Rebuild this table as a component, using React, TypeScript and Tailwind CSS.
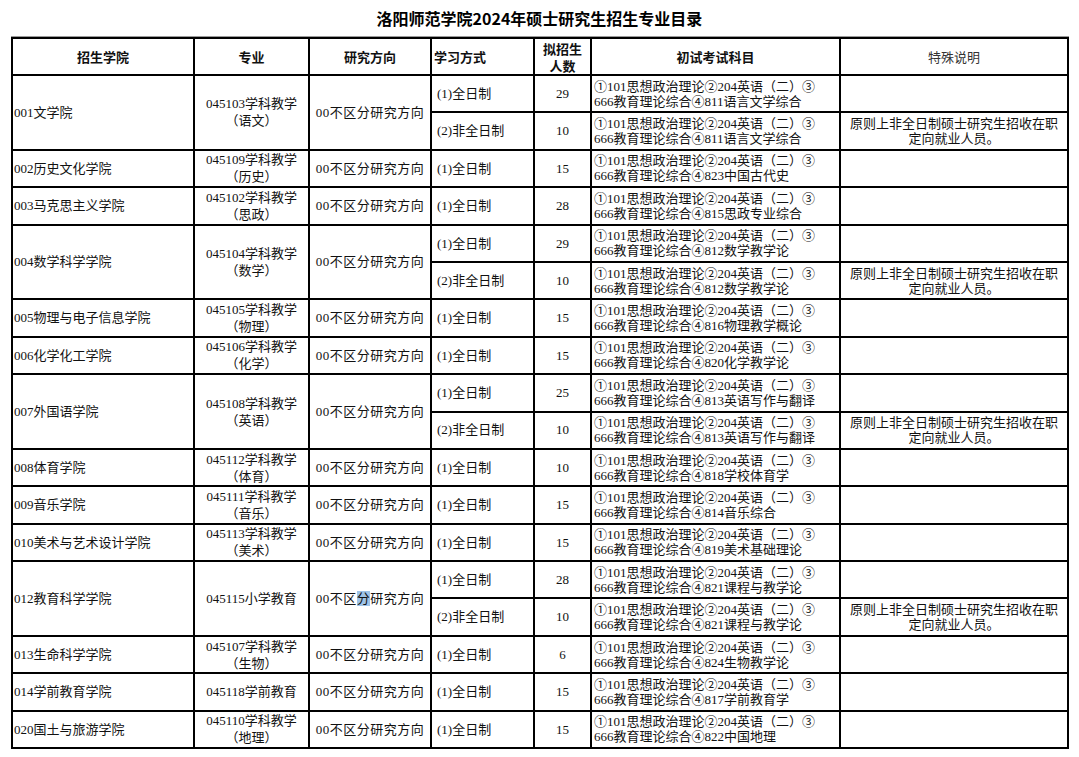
import React from "react"

type Track = { mode: string; count: string; exam: string; note?: boolean }
type Row = { college: string; major: string; sub?: string; hl?: boolean; tracks: Track[] }

const NOTE = "原则上非全日制硕士研究生招收在职"

const rows: Row[] = [
  { college: "001文学院", major: "045103学科教学", sub: "（语文）", tracks: [
    { mode: "(1)全日制", count: "29", exam: "811语言文学综合" },
    { mode: "(2)非全日制", count: "10", exam: "811语言文学综合", note: true },
  ] },
  { college: "002历史文化学院", major: "045109学科教学", sub: "（历史）", tracks: [
    { mode: "(1)全日制", count: "15", exam: "823中国古代史" },
  ] },
  { college: "003马克思主义学院", major: "045102学科教学", sub: "（思政）", tracks: [
    { mode: "(1)全日制", count: "28", exam: "815思政专业综合" },
  ] },
  { college: "004数学科学学院", major: "045104学科教学", sub: "（数学）", tracks: [
    { mode: "(1)全日制", count: "29", exam: "812数学教学论" },
    { mode: "(2)非全日制", count: "10", exam: "812数学教学论", note: true },
  ] },
  { college: "005物理与电子信息学院", major: "045105学科教学", sub: "（物理）", tracks: [
    { mode: "(1)全日制", count: "15", exam: "816物理教学概论" },
  ] },
  { college: "006化学化工学院", major: "045106学科教学", sub: "（化学）", tracks: [
    { mode: "(1)全日制", count: "15", exam: "820化学教学论" },
  ] },
  { college: "007外国语学院", major: "045108学科教学", sub: "（英语）", tracks: [
    { mode: "(1)全日制", count: "25", exam: "813英语写作与翻译" },
    { mode: "(2)非全日制", count: "10", exam: "813英语写作与翻译", note: true },
  ] },
  { college: "008体育学院", major: "045112学科教学", sub: "（体育）", tracks: [
    { mode: "(1)全日制", count: "10", exam: "818学校体育学" },
  ] },
  { college: "009音乐学院", major: "045111学科教学", sub: "（音乐）", tracks: [
    { mode: "(1)全日制", count: "15", exam: "814音乐综合" },
  ] },
  { college: "010美术与艺术设计学院", major: "045113学科教学", sub: "（美术）", tracks: [
    { mode: "(1)全日制", count: "15", exam: "819美术基础理论" },
  ] },
  { college: "012教育科学学院", major: "045115小学教育", hl: true, tracks: [
    { mode: "(1)全日制", count: "28", exam: "821课程与教学论" },
    { mode: "(2)非全日制", count: "10", exam: "821课程与教学论", note: true },
  ] },
  { college: "013生命科学学院", major: "045107学科教学", sub: "（生物）", tracks: [
    { mode: "(1)全日制", count: "6", exam: "824生物教学论" },
  ] },
  { college: "014学前教育学院", major: "045118学前教育", tracks: [
    { mode: "(1)全日制", count: "15", exam: "817学前教育学" },
  ] },
  { college: "020国土与旅游学院", major: "045110学科教学", sub: "（地理）", tracks: [
    { mode: "(1)全日制", count: "15", exam: "822中国地理" },
  ] },
]

const serif = "font-['Liberation_Serif','Noto_Sans_CJK_SC',serif]"
const hei = "font-['Noto_Sans_CJK_SC',sans-serif]"
const cell = "border-2 border-black align-middle p-0"

function Direction({ hl }: { hl?: boolean }) {
  return (
    <span className="tracking-[0.5px]">
      00不区{hl ? <span className="bg-[#9fc3e7]">分</span> : "分"}研究方向
    </span>
  )
}

export default function App() {
  return (
    <div className={`w-[1079px] h-[757px] bg-white text-[#111] ${serif}`}>
      <h1 className={`h-[36px] flex items-center justify-center text-[16px] font-bold ${hei} text-black`}>
        洛阳师范学院2024年硕士研究生招生专业目录
      </h1>
      <div className="ml-[11px] w-[1058px] border-t border-[#9a9a9a]">
        <table className="w-full table-fixed border-collapse text-[13px]">
          <colgroup>
            <col className="w-[182px]" />
            <col className="w-[115px]" />
            <col className="w-[122px]" />
            <col className="w-[103px]" />
            <col className="w-[57px]" />
            <col className="w-[249px]" />
            <col />
          </colgroup>
          <thead>
            <tr className="h-[37px]">
              <th className={`${cell} ${hei} font-bold`}>招生学院</th>
              <th className={`${cell} ${hei} font-bold`}>专业</th>
              <th className={`${cell} ${hei} font-bold`}>研究方向</th>
              <th className={`${cell} ${hei} font-bold text-left pl-[2px]`}>学习方式</th>
              <th className={`${cell} ${hei} font-bold leading-[17px]`}>拟招生<br />人数</th>
              <th className={`${cell} ${hei} font-bold`}>初试考试科目</th>
              <th className={`${cell} ${hei} font-normal text-[#333]`}>特殊说明</th>
            </tr>
          </thead>
          <tbody>
            {rows.map((r) =>
              r.tracks.map((t, i) => (
                <tr key={r.college + i} className="h-[37.4px]">
                  {i === 0 && (
                    <>
                      <td rowSpan={r.tracks.length} className={`${cell} pl-[1px]`}>{r.college}</td>
                      <td rowSpan={r.tracks.length} className={`${cell} text-center leading-[17px]`}>
                        {r.major}
                        {r.sub && <><br />{r.sub}</>}
                      </td>
                      <td rowSpan={r.tracks.length} className={`${cell} text-center`}>
                        <Direction hl={r.hl} />
                      </td>
                    </>
                  )}
                  <td className={`${cell} pl-[5px]`}>{t.mode}</td>
                  <td className={`${cell} text-center`}>{t.count}</td>
                  <td className={`${cell} pl-[2px] leading-[15px] whitespace-nowrap`}>
                    ①101思想政治理论②204英语（二）③<br />666教育理论综合④{t.exam}
                  </td>
                  <td className={`${cell} text-center leading-[15px]`}>
                    {t.note && <>{NOTE}<br />定向就业人员。</>}
                  </td>
                </tr>
              ))
            )}
          </tbody>
        </table>
      </div>
    </div>
  )
}
